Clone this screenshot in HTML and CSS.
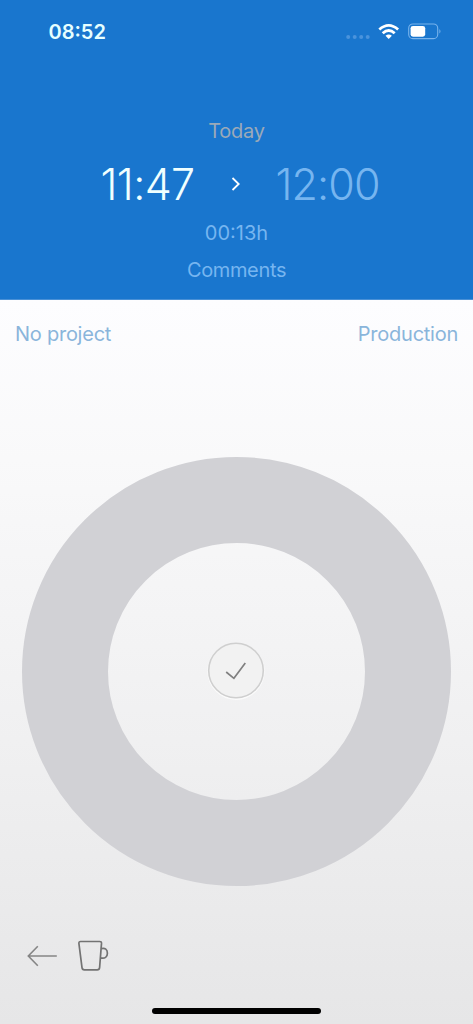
FILE: index.html
```
<!DOCTYPE html>
<html lang="en">
<head>
<meta charset="utf-8">
<title>Time entry</title>
<link rel="stylesheet" href="styles.css">
</head>
<body>
<div class="screen">
  <header class="header">
    <div class="status">
      <span class="clock">08:52</span>
      <svg class="status-icons" width="98" height="24" viewBox="0 0 98 24">
        <g fill="#4a93dc"><circle cx="4.2" cy="17" r="2"/><circle cx="10.7" cy="17" r="2"/><circle cx="17.2" cy="17" r="2"/><circle cx="23.7" cy="17" r="2"/></g>
        <g fill="none" stroke="#fff" stroke-width="2.8"><path d="M35.3 9.5Q44.7 1.2 54.1 9.5"/><path d="M38.7 13.3Q44.7 7.8 50.7 13.3"/></g>
        <path d="M41.5 15.8Q44.7 13 47.9 15.8L44.7 19Z" fill="#fff"/>
        <rect x="64.7" y="4" width="29" height="14.6" rx="4.2" fill="none" stroke="#78b3ec" stroke-width="1.1"/>
        <rect x="66.6" y="5.9" width="14.6" height="10.8" rx="2.4" fill="#fff"/>
        <path d="M95.4 9Q97.6 11.3 95.4 13.6Z" fill="#78b3ec"/>
      </svg>
    </div>
    <div class="day"><span>Today</span></div>
    <div class="times">
      <span class="start">11:47</span>
      <svg class="chevron" width="10" height="16" viewBox="0 0 10 16"><path d="M1.5 2L7.7 8L1.5 14" fill="none" stroke="#fff" stroke-width="1.8"/></svg>
      <span class="end">12:00</span>
    </div>
    <div class="duration"><span>00:13h</span></div>
    <div class="comments"><span>Comments</span></div>
  </header>
  <main class="content">
    <div class="labels"><span class="project">No project</span><span class="task">Production</span></div>
    <div class="ring">
      <svg class="confirm" width="58" height="58" viewBox="0 0 58 58">
        <circle cx="29" cy="29.3" r="27.8" fill="none" stroke="#fbfbfb" stroke-width="1.6"/>
        <circle cx="29" cy="28.5" r="27.3" fill="#f2f2f2" stroke="#cfcfcf" stroke-width="1.6"/>
        <path d="M19.2 30L26.9 36.3L38.3 21" fill="none" stroke="#808080" stroke-width="1.7"/>
      </svg>
    </div>
    <div class="tools">
      <svg width="32" height="34" viewBox="0 0 32 34"><path d="M30.8 17H2.3M11.8 7.3L2.3 17L11.8 26.7" fill="none" stroke="#858585" stroke-width="1.6"/></svg>
      <svg width="32" height="34" viewBox="0 0 32 34"><g fill="none" stroke="#737373" stroke-width="1.7"><path d="M3.6 2.5H22.6Q24.6 2.5 24.5 4.4L22.6 28.6Q22.4 30.8 20.2 30.8H7.4Q5.2 30.8 5 28.6L1.9 4.4Q1.7 2.5 3.6 2.5Z"/><path d="M24 9.7Q30.4 8.2 30.4 14.2Q30.4 20.2 23.3 18.8"/></g></svg>
    </div>
    <div class="home"></div>
  </main>
</div>
</body>
</html>
```
FILE: styles.css
```
body {
  margin: 0;
  font-family: Inter, "Liberation Sans", sans-serif;
  font-size: 20px;
  line-height: 30px;
}
.screen {
  width: 473px;
  height: 1024px;
  display: flex;
  flex-direction: column;
  overflow: hidden;
}
.header {
  box-sizing: border-box;
  height: 300px;
  flex: none;
  background: #1976ce;
  border-bottom: 1px solid #4990d6;
  color: #76b5f0;
  text-align: center;
}
.status {
  display: flex;
  justify-content: space-between;
  align-items: center;
  height: 30px;
  padding: 17px 31px 0 48.5px;
}
.clock {
  color: #e6ffff;
  font-weight: 600;
  font-size: 20px;
}
.status-icons { margin-top: -1px; }
.day { margin-top: 69px; color: #9ba9b8; letter-spacing: -0.25px; }
.times {
  display: flex;
  align-items: center;
  height: 60px;
  margin-top: 8px;
  padding-left: 100.5px;
  font-size: 43px;
  font-weight: 300;
  letter-spacing: -0.6px;
}
.start { width: 130px; text-align: left; color: #f0ffff; white-space: nowrap; }
.end { margin-left: 35px; white-space: nowrap; letter-spacing: -0.9px; }
.duration { margin-top: 4px; }
.comments { margin-top: 7px; letter-spacing: -0.35px; }
.content {
  flex: 1;
  display: flex;
  flex-direction: column;
  align-items: center;
  background: linear-gradient(#fdfdff, #f9f9fa 22%, #efeff0 65%, #e6e6e7);
}
.labels {
  box-sizing: border-box;
  width: 100%;
  display: flex;
  justify-content: space-between;
  padding: 19px 15px 0 15px;
  color: #8ab5db;
  letter-spacing: -0.25px;
}
.ring {
  box-sizing: border-box;
  width: 429px;
  height: 429px;
  margin-top: 108px;
  border: 86px solid #d1d1d5;
  border-radius: 50%;
  display: flex;
  align-items: center;
  justify-content: center;
}
.confirm { margin: -2px 1px 0 0; }
.tools {
  box-sizing: border-box;
  width: 100%;
  display: flex;
  gap: 19px;
  padding-left: 26px;
  margin-top: 53px;
}
.home {
  width: 169px;
  height: 6px;
  border-radius: 3px;
  margin-top: 35px;
  background: #000;
}
```
